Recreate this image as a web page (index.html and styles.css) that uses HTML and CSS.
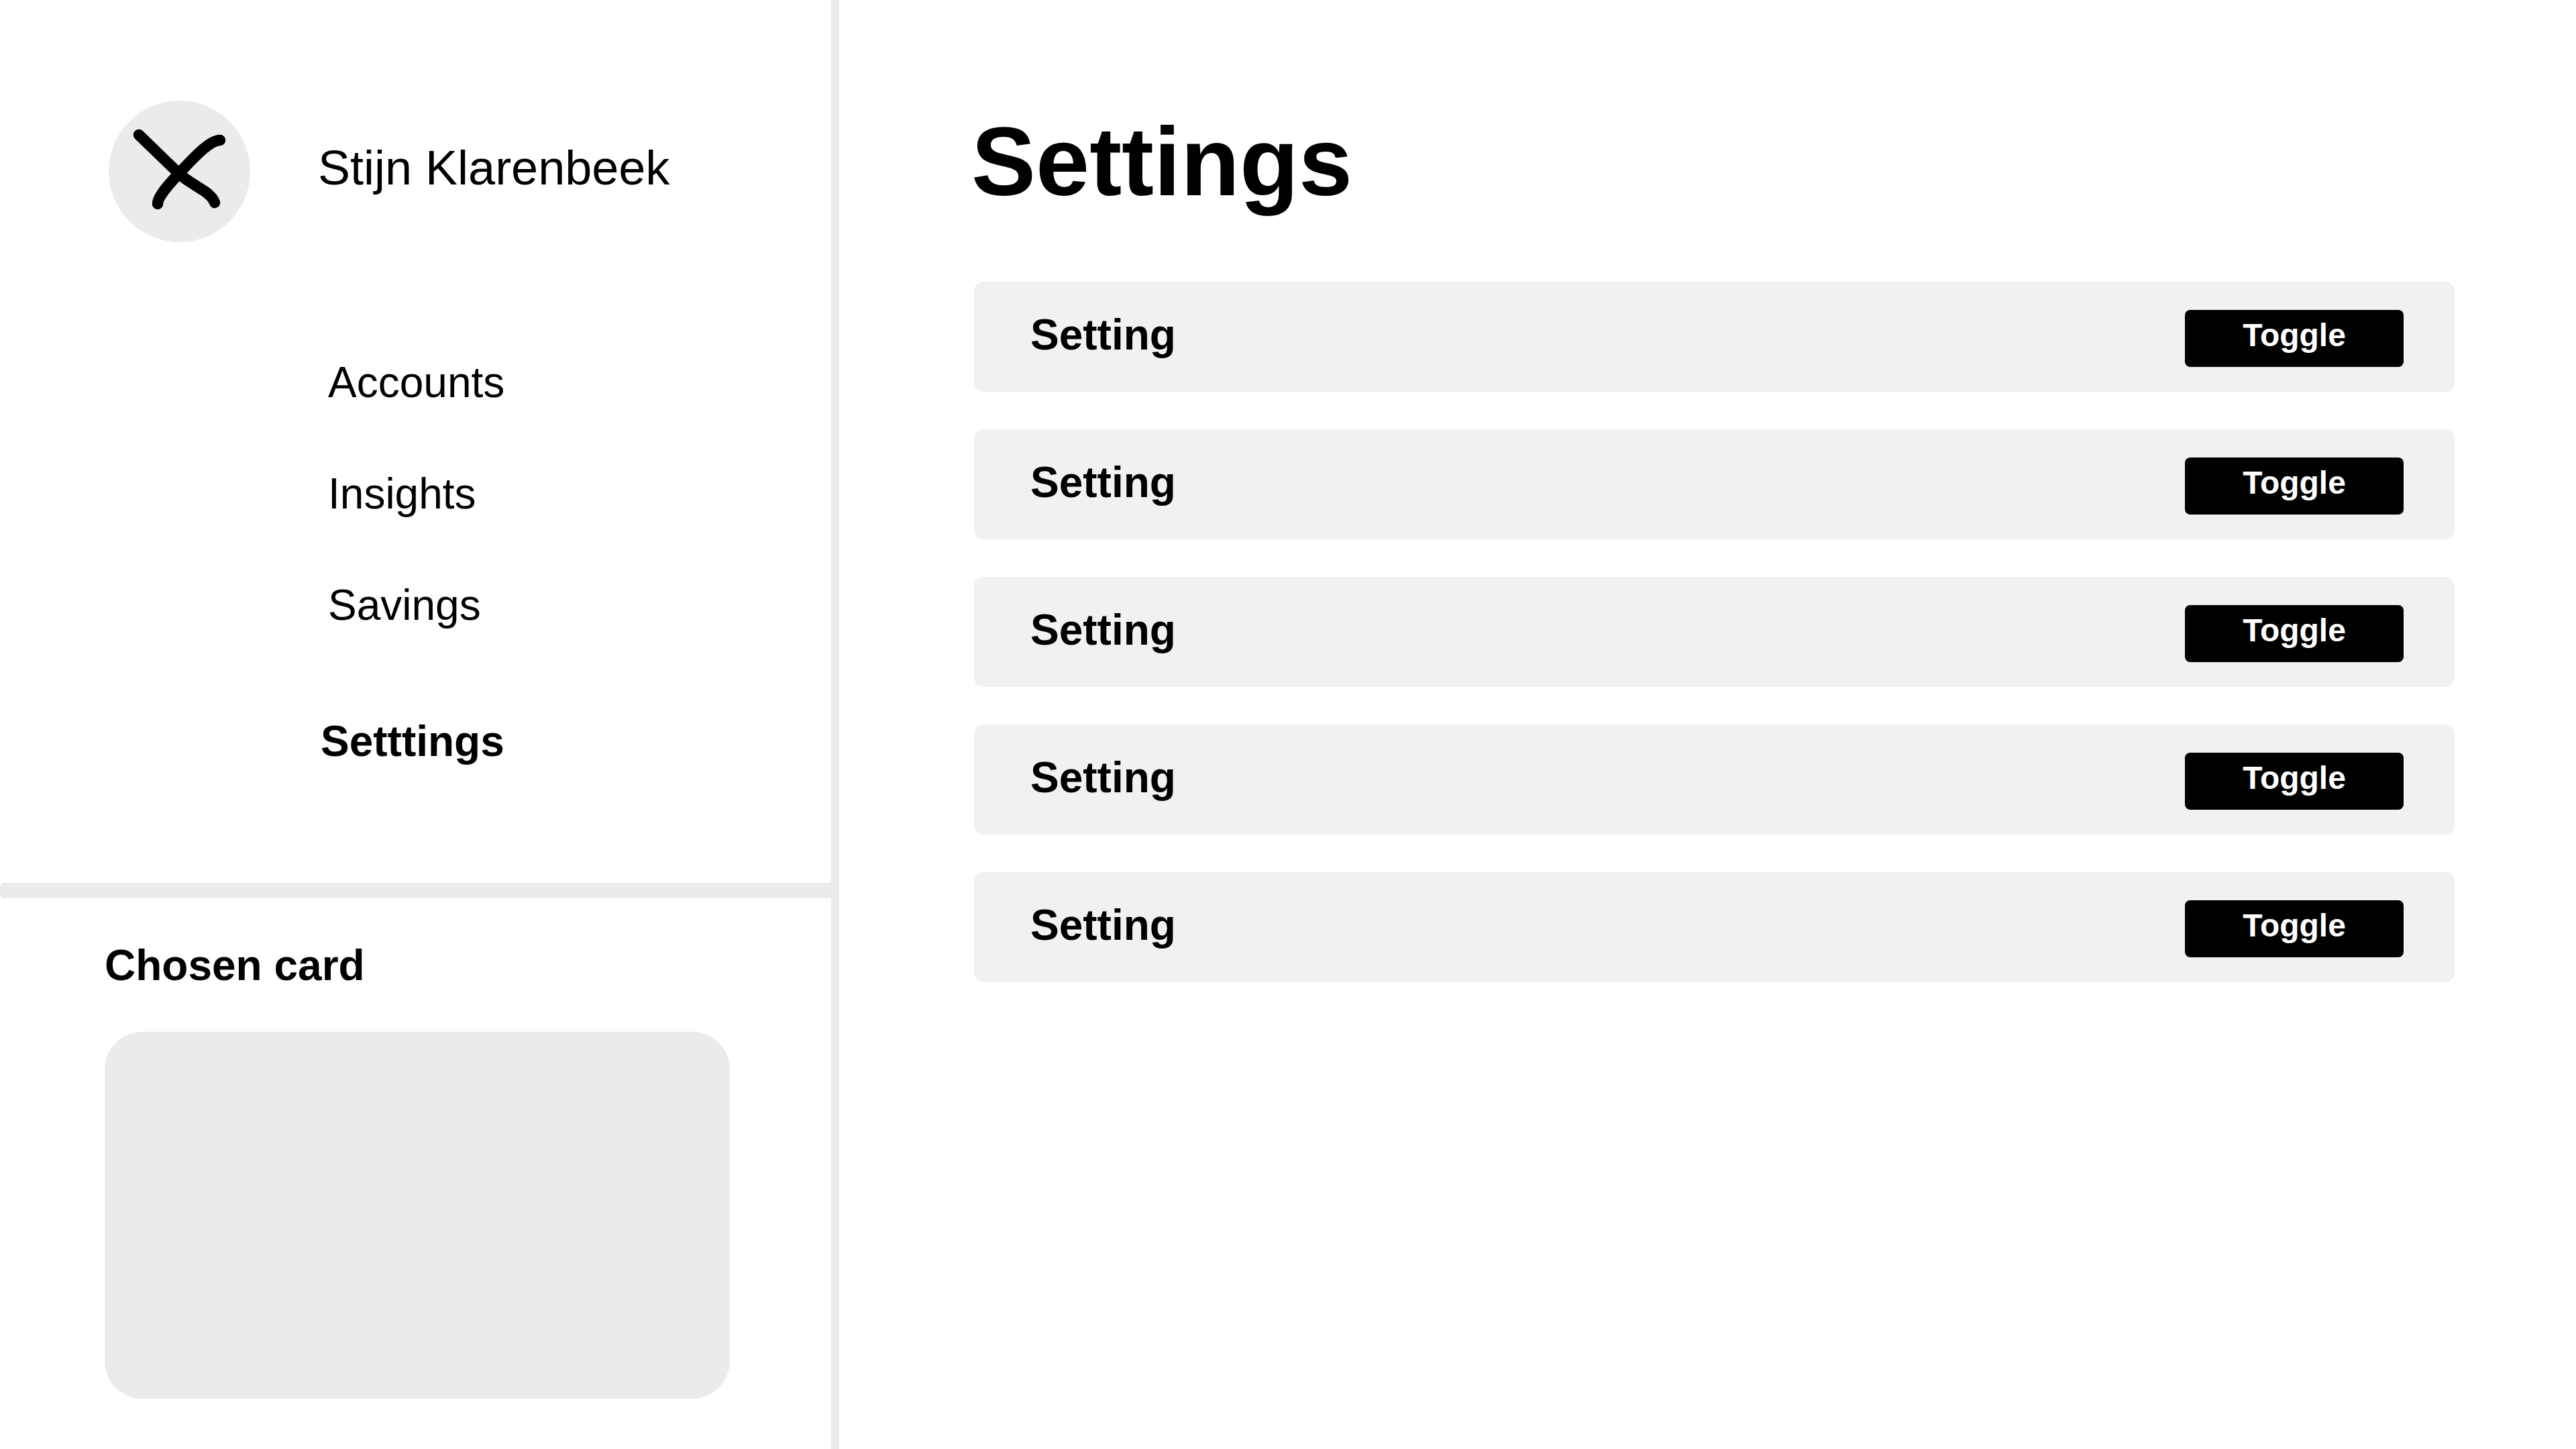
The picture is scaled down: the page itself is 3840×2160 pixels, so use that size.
FILE: index.html
```html
<!DOCTYPE html>
<html lang="en">
<head>
  <meta charset="utf-8">
  <meta name="viewport" content="width=device-width, initial-scale=1">
  <title>Settings</title>
  <link rel="stylesheet" href="styles.css">
</head>
<body>
  <div class="app">
    <aside class="sidebar">
      <div class="profile">
        <svg class="avatar" viewBox="0 0 211 211" aria-hidden="true">
          <circle cx="105.500" cy="105.500" r="105.500" fill="#ebebeb"/>
          <g fill="none" stroke="#000" stroke-width="16.500" stroke-linecap="round" stroke-linejoin="round">
            <path d="M45 51L105 109C113 117 134 129 143 135C150 140 156 146 158 152"/>
            <path d="M166 59C151 59 129 83 109 104C93 121 73 142 73 154"/>
          </g>
        </svg>
        <span class="profile-name">Stijn Klarenbeek</span>
      </div>
      <nav class="nav">
        <a class="nav-link" href="#accounts">Accounts</a>
        <a class="nav-link" href="#insights">Insights</a>
        <a class="nav-link" href="#savings">Savings</a>
        <a class="nav-link nav-link-current" href="#settings" aria-current="page">Setttings</a>
      </nav>
      <hr class="divider">
      <section class="chosen">
        <h2 class="chosen-title">Chosen card</h2>
        <div class="chosen-card"></div>
      </section>
    </aside>
    <main class="content">
      <h1 class="page-title">Settings</h1>
      <ul class="settings">
        <li class="setting"><span class="setting-name" id="s1">Setting</span><button class="toggle" type="button" aria-describedby="s1">Toggle</button></li>
        <li class="setting"><span class="setting-name" id="s2">Setting</span><button class="toggle" type="button" aria-describedby="s2">Toggle</button></li>
        <li class="setting"><span class="setting-name" id="s3">Setting</span><button class="toggle" type="button" aria-describedby="s3">Toggle</button></li>
        <li class="setting"><span class="setting-name" id="s4">Setting</span><button class="toggle" type="button" aria-describedby="s4">Toggle</button></li>
        <li class="setting"><span class="setting-name" id="s5">Setting</span><button class="toggle" type="button" aria-describedby="s5">Toggle</button></li>
      </ul>
    </main>
  </div>
</body>
</html>
```
FILE: styles.css
```css
* {
  box-sizing: border-box;
}

body {
  margin: 0;
  background: #fff;
  color: #000;
  font-family: "Liberation Sans", Arial, Helvetica, sans-serif;
  font-size: 64px;
  line-height: 74px;
}

.app {
  display: flex;
  min-height: 100vh;
}

.sidebar {
  flex: none;
  width: min(1251px, 33%);
  padding-top: 150px;
  border-right: 12px solid #ebebeb;
}

.profile {
  display: flex;
  align-items: center;
  gap: 101px;
  padding-left: 162px;
}

.avatar {
  flex: none;
  width: 211px;
  height: 211px;
}

.profile-name {
  padding-bottom: 12px;
  font-size: 72px;
  line-height: 84px;
}

.nav {
  display: flex;
  flex-direction: column;
  align-items: flex-start;
  gap: 92px;
  padding: 172px 0 0 478px;
}

.nav-link {
  padding-left: 11px;
  color: inherit;
  text-decoration: none;
}

.nav-link-current {
  margin-top: 37px;
  padding-left: 0;
  font-weight: 700;
}

.divider {
  height: 23px;
  margin: 174px 0 0;
  border: 0;
  border-radius: 6px 0 0 6px;
  background: #ebebeb;
}

.chosen {
  padding: 63px 151px 62px 156px;
}

.chosen-title {
  margin: 0 0 62px;
  font-size: 64px;
}

.chosen-card {
  aspect-ratio: 932 / 547;
  border-radius: 56px;
  background: #ebebeb;
}

.content {
  flex: 1;
  min-width: 0;
  padding: 162px 181px 62px 197px;
}

.page-title {
  margin: 0 0 98px;
  font-size: 144px;
  line-height: 160px;
}

.settings {
  display: grid;
  gap: 56px;
  margin: 0;
  padding: 0 0 0 4px;
  list-style: none;
}

.setting {
  display: flex;
  align-items: flex-start;
  justify-content: space-between;
  padding: 42px 76px 37px 84px;
  border-radius: 14px;
  background: #f1f1f1;
}

.setting-name {
  font-weight: 700;
}

.toggle {
  width: 326px;
  padding: 10px 0 19px;
  border: 0;
  border-radius: 8px;
  background: #000;
  color: #fff;
  font: 700 48px/56px "Liberation Sans", Arial, Helvetica, sans-serif;
  cursor: pointer;
}
```
